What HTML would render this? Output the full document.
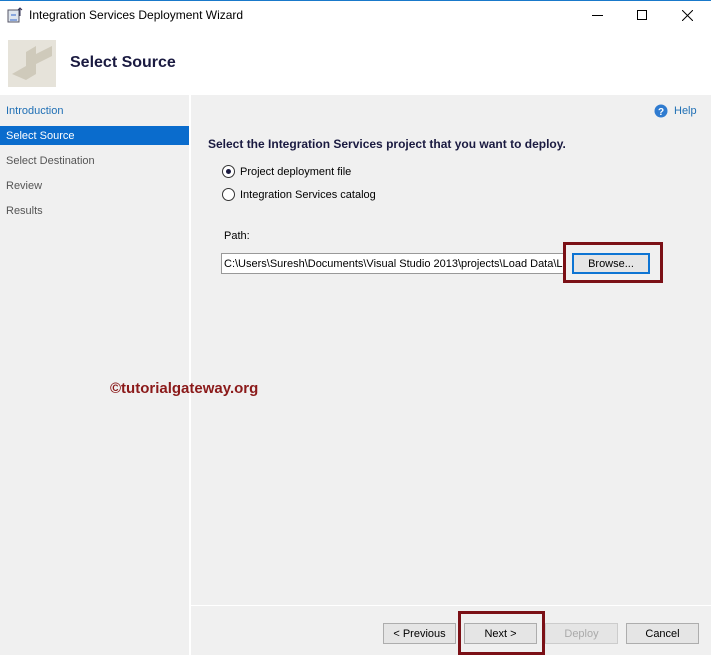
<!DOCTYPE html>
<html><head><style>
*{margin:0;padding:0;box-sizing:border-box}
body{width:711px;height:655px;overflow:hidden;background:#f0f0f0;font-family:"Liberation Sans",sans-serif;font-size:11px;color:#000;position:relative}
.a{position:absolute}
.t{position:absolute;line-height:15px}
.btn{position:absolute;height:21px;border:1px solid #adadad;background:#e5e5e5;text-align:center;line-height:20px;font-size:11px;color:#000}
.red{position:absolute;border:3px solid #7b1016}
.rad{position:absolute;width:13px;height:13px;border:1px solid #333;border-radius:50%;background:#fff}
</style></head><body>
<div class="a" style="left:0;top:0;width:711px;height:95px;background:#fff;border-top:1px solid #1979ca"></div>
<svg class="a" style="left:7px;top:7px" width="16" height="16"><rect x="1" y="3" width="11" height="12" fill="#dfe6ee" stroke="#556"/><path d="M3 13h7M4 8h5" stroke="#36c"/><path d="M13 1v8M11 3l2-2 2 2" stroke="#335" fill="none"/></svg>
<div class="a" style="left:29px;top:8px;font-size:12px;color:#000">Integration Services Deployment Wizard</div>
<div class="a" style="left:592px;top:15px;width:11px;height:1px;background:#000"></div>
<div class="a" style="left:637px;top:10px;width:10px;height:10px;border:1px solid #000"></div>
<svg class="a" style="left:682px;top:10px" width="11" height="11"><path d="M0 0L11 11M11 0L0 11" stroke="#000" stroke-width="1"/></svg>
<div class="a" style="left:8px;top:40px;width:48px;height:47px;background:#e6e3da"></div>
<svg class="a" style="left:8px;top:40px" width="48" height="47"><path d="M4 34l14-8 0-14 10-6 0 28-10 6z M28 14l16-8 0 10-16 8z" fill="#cfcabb"/></svg>
<div class="a" style="left:70px;top:54px;font-size:16px;font-weight:bold;color:#1a1a40">Select Source</div>
<div class="a" style="left:189px;top:95px;width:2px;height:560px;background:#fff"></div>
<div class="t" style="left:6px;top:104px;color:#1f6fb5">Introduction</div>
<div class="a" style="left:0;top:126px;width:189px;height:19px;background:#0a6ccd"></div>
<div class="t" style="left:6px;top:129px;color:#fff">Select Source</div>
<div class="t" style="left:6px;top:154px;color:#555">Select Destination</div>
<div class="t" style="left:6px;top:179px;color:#555">Review</div>
<div class="t" style="left:6px;top:204px;color:#555">Results</div>
<svg class="a" style="left:654px;top:104px" width="14" height="14"><circle cx="7" cy="7" r="6.5" fill="#2f7bd0"/><text x="7" y="11" font-size="10" font-weight="bold" fill="#fff" text-anchor="middle" font-family="Liberation Sans">?</text></svg>
<div class="t" style="left:674px;top:104px;color:#1f6fb5">Help</div>
<div class="a" style="left:208px;top:137px;font-size:12px;font-weight:bold;color:#1a1a40">Select the Integration Services project that you want to deploy.</div>
<div class="rad" style="left:222px;top:165px"><div class="a" style="left:3px;top:3px;width:5px;height:5px;border-radius:50%;background:#1a1a40"></div></div>
<div class="t" style="left:240px;top:165px">Project deployment file</div>
<div class="rad" style="left:222px;top:188px"></div>
<div class="t" style="left:240px;top:188px">Integration Services catalog</div>
<div class="t" style="left:224px;top:229px">Path:</div>
<div class="a" style="left:221px;top:253px;width:343px;height:21px;background:#fff;border:1px solid #999;overflow:hidden;white-space:nowrap;padding:4px 0 0 2px">C:\Users\Suresh\Documents\Visual Studio 2013\projects\Load Data\Load</div>
<div class="btn" style="left:572px;top:253px;width:78px;border:2px solid #0d74d3;line-height:18px">Browse...</div>
<div class="red" style="left:563px;top:242px;width:100px;height:41px"></div>
<div class="a" style="left:110px;top:380px;font-size:15px;font-weight:bold;color:#8b1a1a">©tutorialgateway.org</div>
<div class="a" style="left:191px;top:605px;width:520px;height:1px;background:#fff"></div>
<div class="btn" style="left:383px;top:623px;width:73px">&lt; Previous</div>
<div class="btn" style="left:464px;top:623px;width:73px">Next &gt;</div>
<div class="btn" style="left:545px;top:623px;width:73px;color:#aaa;border-color:#ccc">Deploy</div>
<div class="btn" style="left:626px;top:623px;width:73px">Cancel</div>
<div class="red" style="left:458px;top:611px;width:87px;height:44px"></div>
</body></html>
